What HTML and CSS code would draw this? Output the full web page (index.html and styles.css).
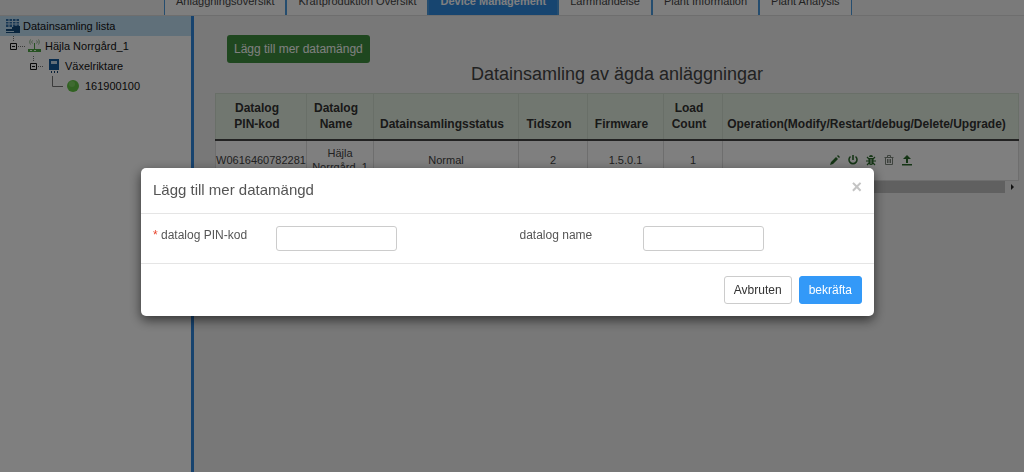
FILE: index.html
```html
<!DOCTYPE html>
<html lang="sv">
<head>
<meta charset="utf-8">
<title>Device Management</title>
<link rel="stylesheet" href="styles.css">
</head>
<body>
<div class="page">
  <nav class="tabs">
    <a class="tab" href="#">Anläggningsöversikt</a>
    <a class="tab" href="#">Kraftproduktion Översikt</a>
    <a class="tab tab-active" href="#">Device Management</a>
    <a class="tab" href="#">Larmhändelse</a>
    <a class="tab" href="#">Plant Information</a>
    <a class="tab" href="#">Plant Analysis</a>
  </nav>
  <div class="columns">
    <aside class="sidebar">
      <div class="node node-root">
        <svg class="icon" width="16" height="16" viewBox="0 0 16 16"><path d="M1 1h13v8H1z" fill="#2f6ea8"/><path d="M1 3.500h13M1 6h13M4 1v8M7.500 1v8M11 1v8" stroke="#bfdcf0" stroke-width="1"/><path d="M7 9h2v2H7zM1 11h10v2H1zM9 8h6v6H9z" fill="#124a7c"/><path d="M1 14h14v1H1z" fill="#124a7c"/></svg>
        <span>Datainsamling lista</span>
      </div>
      <div class="node node-1">
        <svg class="twig" width="18" height="20" viewBox="0 0 18 20"><path d="M5.500 0v6M10 10.500h7" stroke="#777" stroke-dasharray="1 1" fill="none"/><path d="M2.500 7.500h6v6h-6zM4 10.500h3" stroke="#111" fill="#fff"/></svg>
        <svg class="icon" width="16" height="16" viewBox="0 0 16 16"><path d="M1 11h13v3H1z" fill="#4ea544"/><path d="M7.500 5v6M5.500 2.500c-1 1-1 2 0 3M9.500 2.500c1 1 1 2 0 3M3.500 1.500c-1 2-1 3 0 5M11.500 1.500c1 2 1 3 0 5" stroke="#8fb78b" fill="none"/><path d="M7.500 5v6" stroke="#4ea544"/><path d="M3 12.500h2M7 12.500h2" stroke="#e5ffe0"/></svg>
        <span>Häjla Norrgård_1</span>
      </div>
      <div class="node node-2">
        <svg class="twig" width="18" height="20" viewBox="0 0 18 20"><path d="M5.500 0v6M10 10.500h5" stroke="#777" stroke-dasharray="1 1" fill="none"/><path d="M2.500 7.500h6v6h-6zM4 10.500h3" stroke="#111" fill="#fff"/></svg>
        <svg class="icon" width="16" height="16" viewBox="0 0 16 16"><path d="M2 1h10v11H2z" fill="#12599b"/><path d="M4 3h6v3H4z" fill="#c4ddf0"/><path d="M4 14h1M7 14h1M10 14h1" stroke="#12406f" stroke-width="2"/></svg>
        <span>Växelriktare</span>
      </div>
      <div class="node node-3">
        <svg class="twig" width="12" height="20" viewBox="0 0 12 20"><path d="M.5 0v10.500H11" stroke="#777" fill="none"/></svg>
        <svg class="icon" width="16" height="16" viewBox="0 0 16 16"><circle cx="8" cy="8" r="6" fill="#62c544"/><circle cx="7" cy="6" r="3" fill="#7ed562"/></svg>
        <span>161900100</span>
      </div>
    </aside>
    <main class="main">
      <button class="btn-add" type="button">Lägg till mer datamängd</button>
      <h1 class="title">Datainsamling av ägda anläggningar</h1>
      <table class="grid">
        <colgroup><col class="c-pin"><col class="c-name"><col class="c-status"><col class="c-zone"><col class="c-fw"><col class="c-load"><col></colgroup>
        <thead><tr><th>Datalog <span class="keep">PIN-kod</span></th><th>Datalog Name</th><th>Datainsamlingsstatus</th><th>Tidszon</th><th>Firmware</th><th>Load Count</th><th>Operation(Modify/Restart/debug/Delete/Upgrade)</th></tr></thead>
        <tbody><tr><td>W0616460782281</td><td>Häjla Norrgård_1</td><td>Normal</td><td>2</td><td>1.5.0.1</td><td>1</td>
          <td><div class="ops">
            <button type="button" aria-label="Modify"><svg width="12" height="12" viewBox="0 0 12 12"><path d="M1 11l1-3 5-5 2 2-5 5zM8 2l1-1 2 2-1 1z" fill="#2b6a2b"/></svg></button>
            <button type="button" aria-label="Restart"><svg width="12" height="12" viewBox="0 0 12 12"><path d="M3.500 2.500a4 4 0 1 0 5 0M6 1v5" stroke="#2b6a2b" stroke-width="1.600" fill="none"/></svg></button>
            <button type="button" aria-label="Debug"><svg width="12" height="12" viewBox="0 0 12 12"><path d="M4 3a2 2 0 0 1 4 0zM3.500 4h5v4a2.500 3 0 0 1-5 0z" fill="#2b6a2b"/><path d="M2 3l2 2M10 3L8 5M1 7h3M8 7h3M2 11l2-2M10 11L8 9" stroke="#2b6a2b" stroke-width="1.200"/><path d="M6 5v5" stroke="#fff" stroke-width=".8"/></svg></button>
            <button type="button" aria-label="Delete"><svg width="12" height="12" viewBox="0 0 12 12"><path d="M1.500 3.500h9M4.500 3V1.500h3V3M2.500 3.500v7h7v-7M4.500 5v4M6 5v4M7.500 5v4" stroke="#7d877d" fill="none"/></svg></button>
            <button type="button" aria-label="Upgrade"><svg width="12" height="12" viewBox="0 0 12 12"><path d="M6 1l4 4H7v4H5V5H2zM1 10h10v1.500H1z" fill="#2b6a2b"/></svg></button>
          </div></td></tr></tbody>
      </table>
      <div class="scrollbar"><div class="thumb"></div><svg class="arrow" width="14" height="12" viewBox="0 0 14 12"><path d="M6 3l3 3-3 3z" fill="#222"/></svg></div>
    </main>
  </div>
</div>

<div class="backdrop">
  <form class="modal" role="dialog" aria-labelledby="modal-title">
    <header class="modal-head">
      <h2 id="modal-title">Lägg till mer datamängd</h2>
      <button class="close" type="button" aria-label="Close">×</button>
    </header>
    <div class="modal-body">
      <div class="field"><label for="pin"><span class="required">*</span> datalog PIN-kod</label><input id="pin" type="text"></div>
      <div class="field"><label for="name">datalog name</label><input id="name" type="text"></div>
    </div>
    <footer class="modal-foot">
      <button class="btn" type="button">Avbruten</button>
      <button class="btn btn-primary" type="button">bekräfta</button>
    </footer>
  </form>
</div>
</body>
</html>
```

FILE: styles.css
```css
* { box-sizing: border-box; }
body { margin: 0; font: 11px/14px "Liberation Sans", Arial, sans-serif; color: #444; }
button, input { font-family: inherit; }
svg { display: block; flex: none; }

.page { display: flex; flex-direction: column; height: 100vh; overflow: hidden; background: #f1f1f1; }
.tabs { display: flex; align-items: flex-end; flex: none; height: 16px; padding-left: 164px; border-bottom: 1px solid #ddd; background: #f4f4f4; }
.tab { padding: 0 11px; line-height: 28px; color: #444; text-decoration: none; white-space: nowrap; background: #fcfcfc; border-left: 1px solid #4a9ade; border-right: 1px solid #4a9ade; }
.tab-active { color: #fff; font-weight: bold; background: #2f8ae0; }

.columns { display: flex; flex: 1; min-height: 0; }
.sidebar { flex: none; width: 194px; background: #fff; border-right: 3px solid #2f86dd; color: #111; }
.node { display: flex; align-items: center; height: 20px; gap: 2px; }
.node-root { padding-left: 5px; background: #c1e0f5; }
.node-1 { padding-left: 8px; gap: 1px; }
.node-2 { padding-left: 28px; gap: 1px; }
.node-1 .icon, .node-2 .icon { margin-right: 1px; }
.node-3 { padding-left: 52px; gap: 1px; }
.node-3 .icon { margin-right: 3px; }

.main { flex: 1; min-width: 0; padding: 19px 5px 0 21px; }
.btn-add { display: block; margin-left: 12px; padding: 0 7px; height: 28px; border: 0; border-radius: 3px; background: #3f8f3f; color: #fff; font-size: 12px; }
.title { margin: 0 0 8px; font-size: 18px; font-weight: normal; line-height: 22px; text-align: center; color: #444; }

.grid { width: 100%; table-layout: fixed; border-collapse: collapse; background: #fff; text-align: center; }
.c-pin { width: 91px; }
.c-name { width: 67px; }
.c-status { width: 145px; }
.c-zone { width: 69px; }
.c-fw { width: 76px; }
.c-load { width: 59px; }
.keep { white-space: nowrap; }
.grid th { height: 46px; padding: 6px 12px 7px 4px; vertical-align: bottom; font-size: 12px; line-height: 16px; color: #333; background: #e3efe0; border: 1px solid #d3dfd0; border-bottom: 2px solid #444; }
.grid td { height: 40px; padding: 0; border: 1px solid #ddd; vertical-align: middle; }
.ops { display: flex; justify-content: center; gap: 6px; }
.ops button { padding: 0; border: 0; background: none; }

.scrollbar { display: flex; align-items: center; height: 12px; background: #f1f1f1; }
.thumb { flex: 1; height: 12px; background: #c1c1c1; }

.backdrop { position: fixed; inset: 0; display: flex; align-items: flex-start; justify-content: center; padding: 168px 9px 0 0; background: rgba(0, 0, 0, .5); }
.modal { width: 90%; max-width: 733px; background: #fff; border-radius: 5px; box-shadow: 0 4px 12px rgba(0, 0, 0, .6); color: #555; }
.modal-head { display: flex; justify-content: space-between; align-items: flex-start; padding: 11px 12px; height: 46px; border-bottom: 1px solid #e5e5e5; }
.modal-head h2 { margin: 0; font-size: 15px; font-weight: normal; line-height: 21px; }
.close { padding: 0; border: 0; background: none; font-size: 18px; font-weight: bold; line-height: 16px; color: #c4c4c4; }
.modal-body { display: grid; grid-template-columns: 1fr 1fr; padding: 12px 0; font-size: 12px; }
.field { display: flex; align-items: flex-start; padding-left: 12px; }
.field label { width: 123px; line-height: 18px; }
.field input { width: 121px; height: 25px; padding: 2px 6px; border: 1px solid #ccc; border-radius: 3px; font-size: 12px; }
.required { color: #e8452c; }
.modal-foot { display: flex; justify-content: flex-end; gap: 7px; padding: 12px; border-top: 1px solid #e5e5e5; }
.btn { height: 28px; padding: 0 9px; border: 1px solid #ccc; border-radius: 3px; background: #fff; color: #333; font-size: 12px; }
.btn-primary { border-color: #3399f8; background: #3399f8; color: #fff; }
```
